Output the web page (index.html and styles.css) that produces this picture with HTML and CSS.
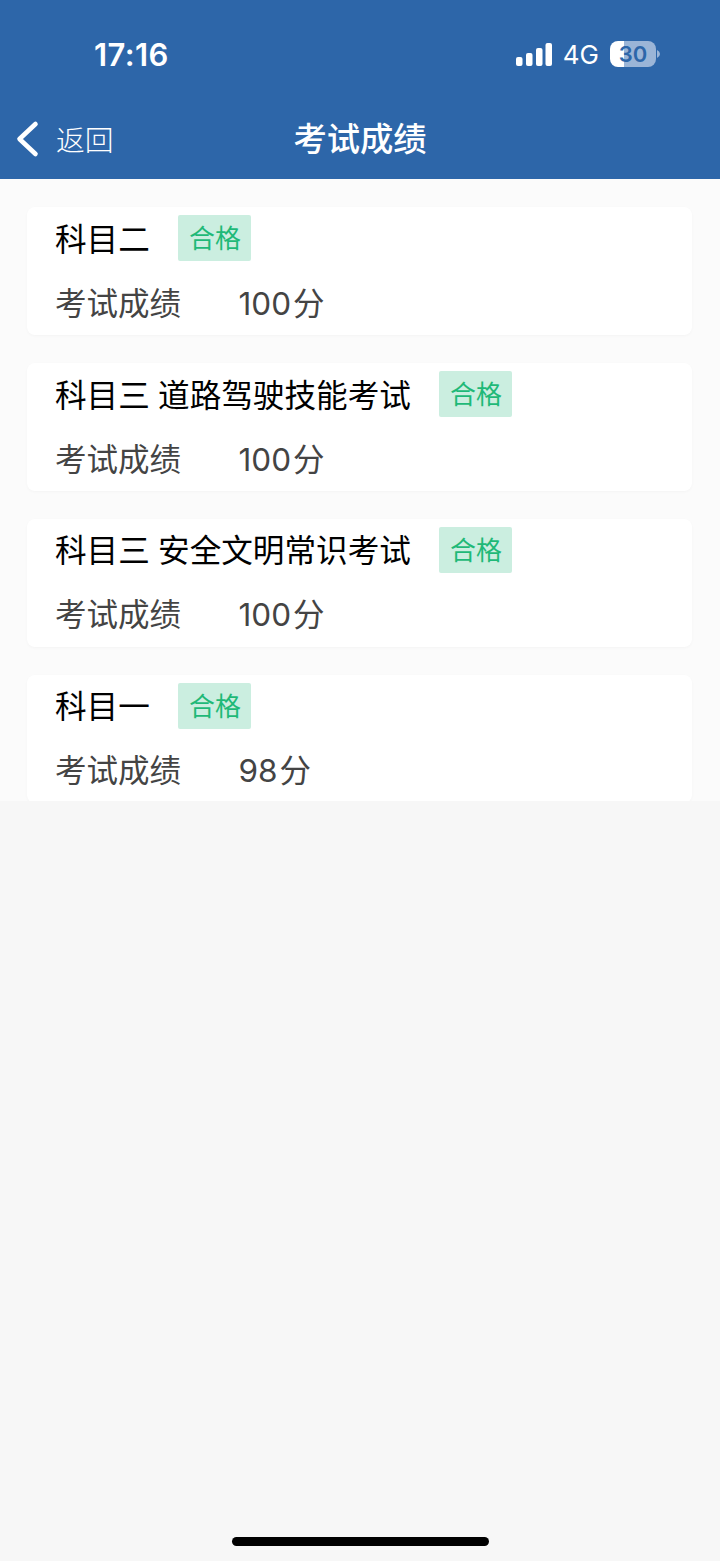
FILE: index.html
```html
<!DOCTYPE html>
<html lang="zh-CN">

<head>
  <meta charset="UTF-8">
  <meta name="viewport" content="width=device-width, initial-scale=1.0">
  <title>考试成绩</title>
  <link rel="stylesheet" href="styles.css">
</head>

<body>
  <header>
    <div class="status-bar">
      <span class="time">17:16</span>
      <div class="status-icons">
        <svg class="signal" width="36" height="23" viewBox="0 0 36 23" fill="#fff">
          <rect x="0" y="14" width="6.5" height="9" rx="2" />
          <rect x="10" y="10" width="6.5" height="13" rx="2" />
          <rect x="20" y="5" width="6.5" height="18" rx="2" />
          <rect x="29.5" y="0" width="6.5" height="23" rx="2" />
        </svg>
        <span class="network">4G</span>
        <div class="battery"><span>30</span></div>
        <svg class="battery-tip" width="3" height="8" viewBox="0 0 3 8">
          <path d="M0 0 Q3 1.5 3 4 Q3 6.5 0 8 Z" fill="#9bb5d7" />
        </svg>
      </div>
    </div>
    <div class="nav-bar">
      <a class="back" href="#">
        <svg width="24" height="38" viewBox="0 0 24 38" fill="none" stroke="#fff" stroke-width="4.6" stroke-linecap="round" stroke-linejoin="round">
          <path d="M20.5 4 L4.5 19 L20.5 34" />
        </svg>
        <span>返回</span>
      </a>
      <h1>考试成绩</h1>
    </div>
  </header>

  <main>
    <div class="card">
      <div class="subject"><h2>科目二</h2><span class="tag">合格</span></div>
      <div class="score"><span class="label">考试成绩</span><span class="num">100</span><span>分</span></div>
    </div>
    <div class="card">
      <div class="subject"><h2>科目三 道路驾驶技能考试</h2><span class="tag">合格</span></div>
      <div class="score"><span class="label">考试成绩</span><span class="num">100</span><span>分</span></div>
    </div>
    <div class="card">
      <div class="subject"><h2>科目三 安全文明常识考试</h2><span class="tag">合格</span></div>
      <div class="score"><span class="label">考试成绩</span><span class="num">100</span><span>分</span></div>
    </div>
    <div class="card">
      <div class="subject"><h2>科目一</h2><span class="tag">合格</span></div>
      <div class="score"><span class="label">考试成绩</span><span class="num">98</span><span>分</span></div>
    </div>
  </main>

  <div class="home-indicator"></div>
</body>

</html>
```
FILE: styles.css
```css
* {
  box-sizing: border-box;
}

body {
  margin: 0;
  height: 1561px;
  display: flex;
  flex-direction: column;
  background-color: #f7f7f7;
  font-family: Inter, 'Noto Sans CJK SC', sans-serif;
}

header {
  height: 179px;
  background-color: #2d66a9;
  color: #fff;
}

.status-bar {
  height: 98px;
  padding: 10px 60px 0 94px;
  display: flex;
  align-items: center;
  justify-content: space-between;
}

.time {
  font-size: 31px;
  font-weight: 600;
  letter-spacing: 0.4px;
}

.status-icons {
  display: flex;
  align-items: center;
}

.network {
  margin: 0 11px;
  font-size: 26px;
}

.battery {
  width: 46px;
  height: 26px;
  border-radius: 8px;
  background: linear-gradient(to right, #fff 14px, #9bb5d7 14px);
  color: #2d66a9;
  font-size: 22px;
  font-weight: 600;
  line-height: 26px;
  text-align: center;
}

.battery-tip {
  margin-left: 1px;
}

.nav-bar {
  height: 81px;
  padding: 0 15px;
  display: grid;
  grid-template-columns: 1fr auto 1fr;
  align-items: center;
}

.back {
  display: flex;
  align-items: center;
  gap: 17px;
  color: #fff;
  font-size: 28.8px;
  font-weight: 300;
  text-decoration: none;
}

h1 {
  margin: 0;
  font-size: 33.3px;
  font-weight: 500;
  line-height: 48px;
}

main {
  height: 622px;
  padding: 28.4px 28px 0 27px;
  display: flex;
  flex-direction: column;
  gap: 28px;
  overflow: hidden;
  background-color: #fbfbfb;
}

.card {
  flex: none;
  height: 127.8px;
  padding: 8px 28px 0;
  border-radius: 8px;
  background-color: #fff;
  box-shadow: 0 1px 3px rgba(0, 0, 0, 0.03);
}

.subject {
  height: 46px;
  display: flex;
  align-items: center;
  gap: 28.6px;
}

h2 {
  margin: 0;
  padding-top: 3px;
  font-size: 31.6px;
  font-weight: 400;
  line-height: 46px;
  word-spacing: -0.6px;
  color: #000;
}

.tag {
  width: 73px;
  height: 46px;
  padding-top: 1px;
  border-radius: 2px;
  background-color: #cbeee0;
  color: #1fb978;
  font-size: 26px;
  line-height: 46px;
  text-align: center;
}

.score {
  height: 46px;
  margin-top: 19.4px;
  display: flex;
  align-items: center;
  color: #444;
  font-size: 31.5px;
  line-height: 46px;
}

.label {
  width: 183.5px;
}

.num {
  margin-right: 2px;
}

.home-indicator {
  width: 257px;
  height: 9px;
  margin: auto auto 15px;
  border-radius: 5px;
  background-color: #000;
}
```
